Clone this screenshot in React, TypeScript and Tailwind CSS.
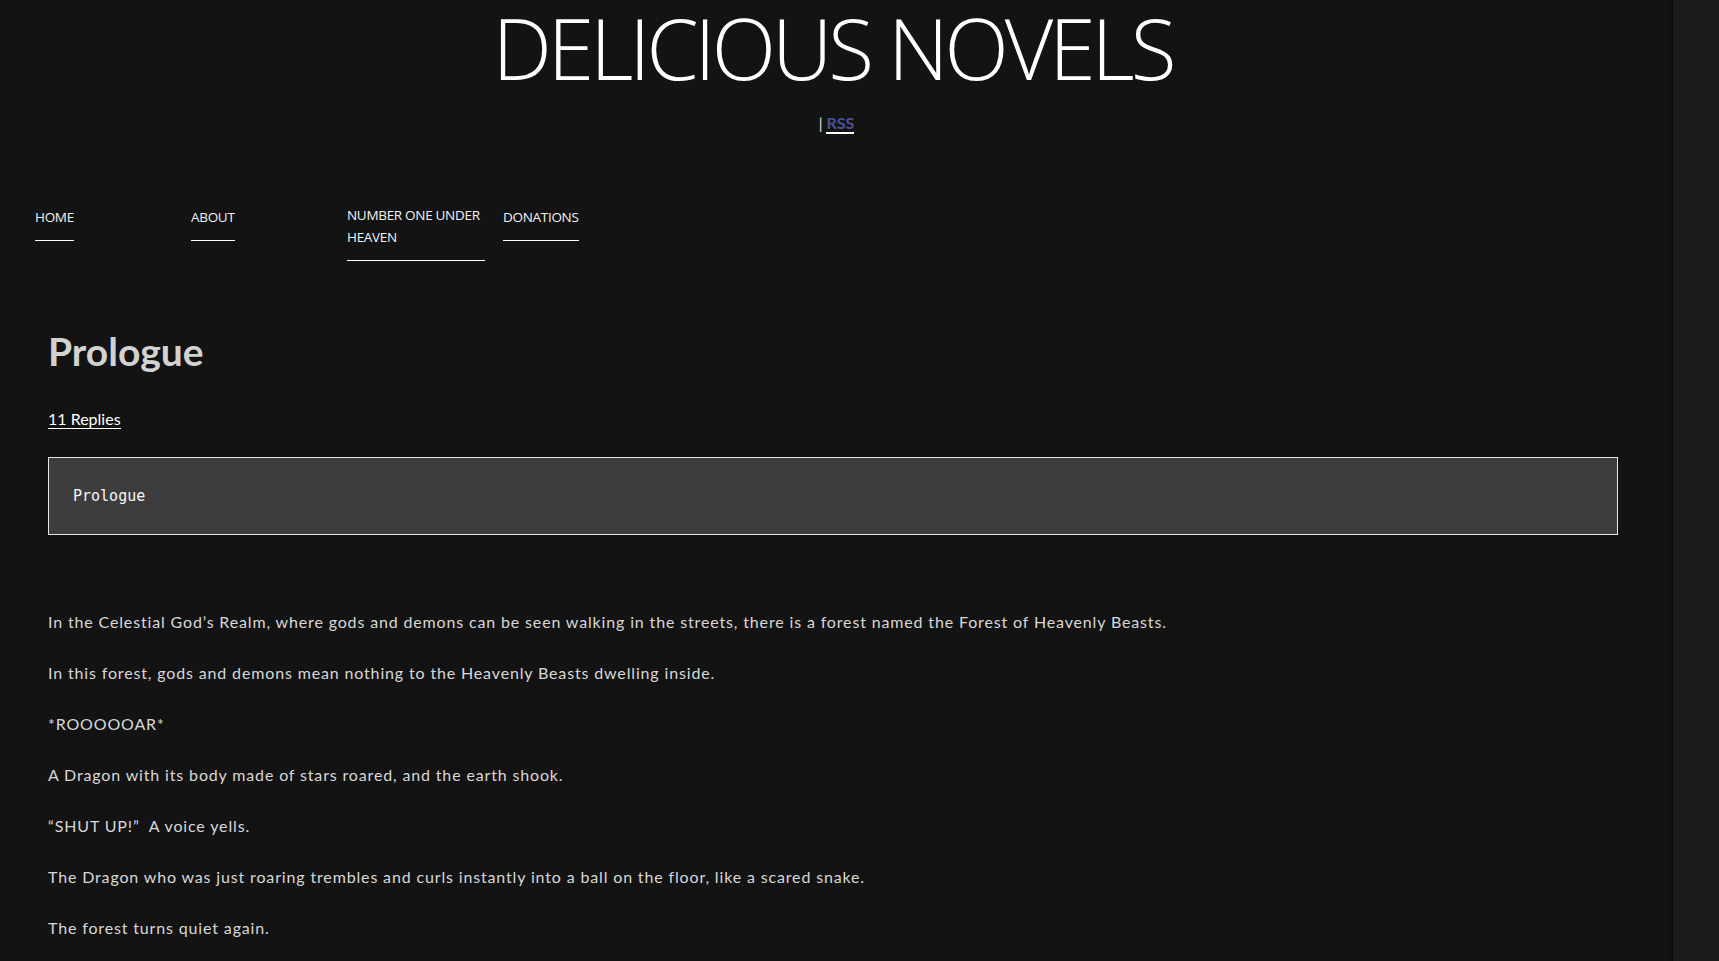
import React from 'react'

const navItems = ['HOME', 'ABOUT', 'NUMBER ONE UNDER HEAVEN', 'DONATIONS']

const paragraphs = [
  'In the Celestial God’s Realm, where gods and demons can be seen walking in the streets, there is a forest named the Forest of Heavenly Beasts.',
  'In this forest, gods and demons mean nothing to the Heavenly Beasts dwelling inside.',
  '*ROOOOOAR*',
  'A Dragon with its body made of stars roared, and the earth shook.',
  '“SHUT UP!”\u00a0 A voice yells.',
  'The Dragon who was just roaring trembles and curls instantly into a ball on the floor, like a scared snake.',
  'The forest turns quiet again.',
]

// Dark reading page: centred site title, plain nav row, then the chapter body.
export default function App() {
  return (
    <div className="flex min-h-screen bg-[#131313] font-['Lato',sans-serif]">
      <div className="min-w-0 flex-1 pb-10">
        {/* Site title */}
        <header className="text-center">
          <h1 className="pr-[8px] font-['Open_Sans',sans-serif] text-[84px] leading-[96px] font-light tracking-[-4px] text-white">
            DELICIOUS NOVELS
          </h1>
          <p className="mt-[17px] text-[15px] leading-[20px] text-[#e0e0e0]">
            |{' '}
            <a href="#" className="border-b-2 border-white text-[16px] font-bold text-[#4b5199]">
              RSS
            </a>
          </p>
        </header>

        {/* Menu */}
        <nav className="mt-[71px] pl-[35px]">
          <ul className="flex items-start">
            {navItems.map((item) => (
              <li key={item} className="w-[156px]">
                <a
                  href="#"
                  className="inline-block max-w-[138px] border-b border-white pb-[12px] font-['Open_Sans',sans-serif] text-[13.5px] leading-[22px] tracking-[-0.3px] text-[#f2f2f2]"
                >
                  {item}
                </a>
              </li>
            ))}
          </ul>
        </nav>

        {/* Chapter */}
        <article className="mt-[66px] pl-[48px] pr-[55px]">
          <h2 className="text-[39px] leading-[48px] font-bold text-[#d2d2d2]">Prologue</h2>
          <div className="mt-[34px] text-[16px] leading-[20px]">
            <a href="#" className="border-b border-white text-white">
              11 Replies
            </a>
          </div>

          <div className="mt-[28px] border border-[#e6e6e6] bg-[#3d3d3d] px-[24px] py-[26px]">
            <p className="font-['DejaVu_Sans_Mono',monospace] text-[15px] leading-[24px] text-[#f6f6f6]">
              Prologue
            </p>
          </div>

          <div className="mt-[73px]">
            {paragraphs.map((p, i) => (
              <p key={i} className="mb-[24px] text-[16px] leading-[27px] tracking-[0.85px] text-[#d8d8d8]">
                {p}
              </p>
            ))}
          </div>
        </article>
      </div>

      {/* Sidebar edge */}
      <aside className="w-[46px] shrink-0 bg-[#1b1b1b] shadow-[-2px_0_4px_rgba(0,0,0,0.45)]" />
    </div>
  )
}
